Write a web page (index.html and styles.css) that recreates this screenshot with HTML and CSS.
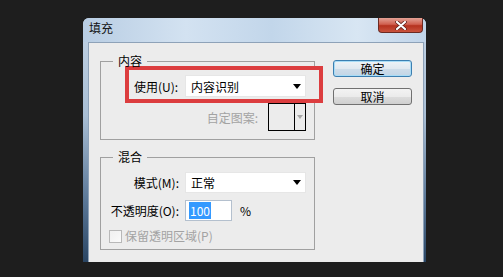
FILE: index.html
```html
<!DOCTYPE html>
<html lang="zh-CN">
<head>
    <meta charset="UTF-8">
    <meta name="viewport" content="width=device-width, initial-scale=1.0">
    <title>填充</title>
    <link rel="stylesheet" href="styles.css">
</head>
<body>

    <div class="window">
        <div class="titlebar">
            <span class="title">填充</span>
            <span class="close">
                <svg width="12" height="9" viewBox="0 0 12 9">
                    <path d="M2 1 L10 8 M10 1 L2 8" stroke="#5a1e17" stroke-width="3.6" stroke-linecap="round"/>
                    <path d="M2 1 L10 8 M10 1 L2 8" stroke="#fff" stroke-width="2.2" stroke-linecap="round"/>
                </svg>
            </span>
        </div>

        <div class="client">
            <div class="groups">
                <!-- 内容 -->
                <fieldset class="group group-content">
                    <legend>内容</legend>
                    <div class="use-row">
                        <span class="label">使用(U):</span>
                        <div class="combo">
                            <span>内容识别</span>
                            <svg width="8" height="5" viewBox="0 0 8 5"><path d="M0 0 H8 L4 5 Z" fill="#000"/></svg>
                        </div>
                    </div>
                    <div class="pattern-row">
                        <span class="disabled">自定图案:</span>
                        <div class="swatch">
                            <span class="swatch-box"></span>
                            <span class="swatch-drop">
                                <svg width="6" height="4" viewBox="0 0 6 4"><path d="M0 0 H6 L3 4 Z" fill="#a8a8a8"/></svg>
                            </span>
                        </div>
                    </div>
                </fieldset>

                <!-- 混合 -->
                <fieldset class="group group-blend">
                    <legend>混合</legend>
                    <div class="form-grid">
                        <span class="label">模式(M):</span>
                        <div class="combo">
                            <span>正常</span>
                            <svg width="8" height="5" viewBox="0 0 8 5"><path d="M0 0 H8 L4 5 Z" fill="#000"/></svg>
                        </div>
                        <span class="label">不透明度(O):</span>
                        <div class="opacity">
                            <span class="field"><span class="selected">100</span></span>
                            <span class="unit">%</span>
                        </div>
                    </div>
                    <div class="check-row">
                        <span class="check"></span>
                        <span class="disabled">保留透明区域(P)</span>
                    </div>
                </fieldset>
            </div>

            <div class="buttons">
                <button class="btn btn-default">确定</button>
                <button class="btn">取消</button>
            </div>
        </div>
    </div>

</body>
</html>
```

FILE: styles.css
```css
/* General */
body {
    margin: 0;
    height: 277px;
    overflow: hidden;
    background: #1e1e1e;
    font-family: "Noto Sans CJK SC", sans-serif;
    font-size: 12px;
    color: #000;
}

/* Window frame */
.window {
    margin: 18px 0 0 83px;
    width: 343px;
    height: 244px;
    display: flex;
    flex-direction: column;
    border-radius: 6px 6px 0 0;
    background: linear-gradient(180deg, #c3d4e6 0%, #a9bed4 40%, #5a7797 75%, #2a4563 100%);
}

.titlebar {
    height: 24px;
    flex: none;
    display: flex;
    justify-content: space-between;
    align-items: flex-start;
    border-radius: 6px 6px 0 0;
    background: linear-gradient(90deg, #b8cde3, #d3e2f1 30%, #c2d6ea 55%, #d8e6f3 80%, #c0d4e9);
}

.title {
    padding-left: 6px;
    line-height: 20px;
    color: #111;
}

.close {
    width: 45px;
    height: 15px;
    margin-right: 3px;
    box-sizing: border-box;
    display: flex;
    align-items: center;
    justify-content: center;
    border: 1px solid #6b2a22;
    border-top: none;
    border-radius: 0 0 4px 4px;
    background: linear-gradient(180deg, #e3a295 0%, #d0604f 45%, #b5321f 55%, #c9533d 100%);
}

/* Client area */
.client {
    flex: 1;
    margin: 0 2px 0 5px;
    display: flex;
    padding: 13px 11px 0 11px;
    background: #ececec;
    border: 1px solid #8ea2b8;
    border-bottom: none;
}

.groups {
    width: 215px;
}

/* Group boxes */
.group {
    width: 215px;
    box-sizing: border-box;
    min-width: 0;
    margin: 0;
    padding: 0 8px 8px 6px;
    border: 1px solid #a0a0a0;
}

.group legend {
    margin-left: 6px;
    padding: 0 5px;
    line-height: 10px;
}

.group-blend {
    margin-top: 12px;
    padding-bottom: 6px;
}

.label {
    white-space: nowrap;
}

.disabled {
    color: #a3a3a3;
}

/* Highlighted row */
.use-row {
    display: flex;
    align-items: center;
    margin: 0 -17px 0 18px;
    padding: 5px 13px 2px 5px;
    border: 4px solid #dc3d3f;
    background: #ececec;
}

.combo {
    width: 121px;
    height: 22px;
    box-sizing: border-box;
    margin-left: auto;
    display: flex;
    align-items: center;
    justify-content: space-between;
    padding: 0 4px 0 5px;
    background: #fff;
    border: 1px solid #e6e6e6;
}

.pattern-row {
    display: flex;
    align-items: center;
    justify-content: flex-end;
    gap: 10px;
}

.swatch {
    width: 38px;
    height: 28px;
    box-sizing: border-box;
    display: flex;
    border: 1px solid #000;
}

.swatch-box {
    flex: 1;
}

.swatch-drop {
    width: 11px;
    box-sizing: border-box;
    display: flex;
    align-items: center;
    justify-content: center;
    border-left: 1px solid #000;
}

/* Blend form */
.form-grid {
    margin-top: 10px;
    display: grid;
    grid-template-columns: 72px auto;
    column-gap: 6px;
    row-gap: 7px;
    align-items: center;
}

.form-grid .label {
    text-align: right;
}

.form-grid .combo {
    height: 21px;
    margin-left: 0;
}

.opacity {
    display: flex;
    align-items: center;
    gap: 8px;
}

.field {
    width: 47px;
    height: 21px;
    box-sizing: border-box;
    display: flex;
    align-items: center;
    padding-left: 3px;
    background: #fff;
    border: 1px solid #b4c0ce;
}

.selected {
    padding: 0 1px;
    line-height: 17px;
    background: #3399ff;
    color: #fff;
}

.check-row {
    margin-top: 8px;
    display: flex;
    align-items: center;
    gap: 3px;
    padding-left: 2px;
    line-height: 14px;
}

.check {
    width: 13px;
    height: 13px;
    box-sizing: border-box;
    border: 1px solid #b8b8b8;
    background: linear-gradient(135deg, #f0f0f0, #fafafa);
}

/* Buttons */
.buttons {
    margin: 4px 0 0 18px;
    display: flex;
    flex-direction: column;
    gap: 11px;
}

.btn {
    width: 79px;
    height: 17px;
    padding: 0;
    font-family: inherit;
    font-size: 12px;
    line-height: 15px;
    color: #000;
    border: 1px solid #707070;
    border-radius: 3px;
    background: linear-gradient(180deg, #f3f3f3 0%, #ebebeb 50%, #dddddd 51%, #cfcfcf 100%);
}

.btn-default {
    border-color: #3c7fb1;
    box-shadow: inset 0 0 0 1px #a8dcf6;
    background: linear-gradient(180deg, #eef3f7 0%, #e1e9f0 50%, #cfdde9 51%, #c2d5e6 100%);
}
```
